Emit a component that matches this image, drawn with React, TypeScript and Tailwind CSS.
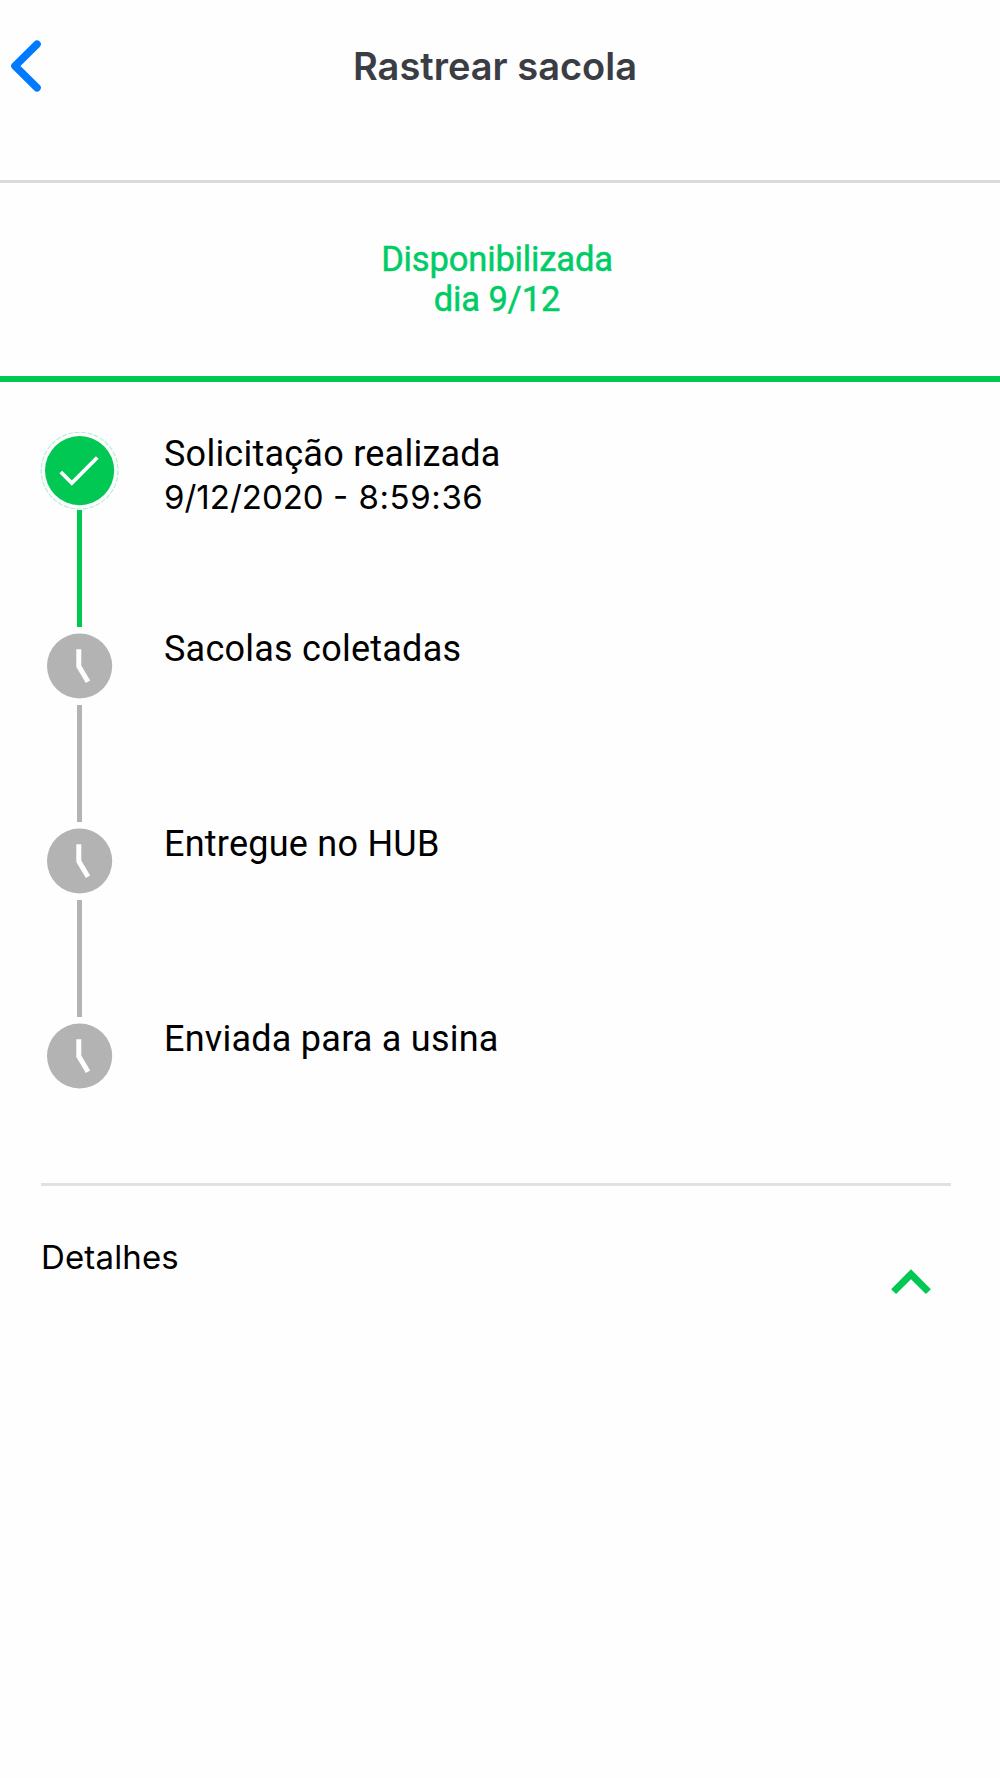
import clsx from 'clsx';

interface Step {
  label: string;
  date?: string;
  time?: string;
  done: boolean;
}

const steps: Step[] = [
  { label: 'Solicitação realizada', date: '9/12/2020', time: '8:59:36', done: true },
  { label: 'Sacolas coletadas', done: false },
  { label: 'Entregue no HUB', done: false },
  { label: 'Enviada para a usina', done: false },
];

function DoneIcon() {
  return (
    <svg className="block h-[78px] w-[80px] shrink-0" viewBox="0 0 80 78" fill="none">
      <circle cx="40.6" cy="38.6" r="38.4" stroke="#b4efd8" strokeWidth="1.2" strokeDasharray="5 1.5" />
      <circle cx="40.6" cy="38.6" r="34.6" fill="#00c853" />
      <path d="M21.8 40 L32.8 51 L58.3 25.5" stroke="#fff" strokeWidth="3.8" />
    </svg>
  );
}

function ClockIcon() {
  return (
    <svg className="block h-[78px] w-[80px] shrink-0" viewBox="0 0 80 78" fill="none">
      <circle cx="40.6" cy="39" r="32.6" fill="#b3b3b3" />
      <path d="M39.8 22.3 V39.2 L49 54.8" stroke="#fff" strokeWidth="5" />
    </svg>
  );
}

function TimelineStep({ step, last }: { step: Step; last: boolean }) {
  return (
    <li className="flex h-[195.33px]">
      <div className="flex w-[80px] shrink-0 flex-col items-center">
        {step.done ? <DoneIcon /> : <ClockIcon />}
        {!last && (
          <div className={clsx('ml-px w-[5px] flex-1', step.done ? 'bg-[#00c853]' : 'bg-[#b3b3b3]')} />
        )}
      </div>
      <div className="pt-px pl-[45px] whitespace-nowrap text-black">
        <p className="font-['Roboto',sans-serif] text-[36px] leading-[42px] tracking-[0.24px]">
          {step.label}
        </p>
        {step.date && (
          <p className="font-['Inter',sans-serif] text-[33px] leading-[44px]">
            {step.date} - <span className="ml-px tracking-[0.6px]">{step.time}</span>
          </p>
        )}
      </div>
    </li>
  );
}

export default function App() {
  return (
    <div className="min-h-[1778px] w-[1000px] bg-[#fefefe]">
      <header className="flex h-[183px] items-start border-b-[3px] border-[#dadada] pt-[36px]">
        <button type="button" aria-label="Voltar" className="h-[60px] w-[50px]">
          <svg className="block h-[60px] w-[50px]" viewBox="0 0 50 60" fill="none">
            <path
              d="M37 8.2 L15 30 L37 51.8"
              stroke="#007aff"
              strokeWidth="7.6"
              strokeLinecap="round"
              strokeLinejoin="round"
            />
          </svg>
        </button>
        <h1 className="flex-1 pr-[60px] text-center font-['Inter',sans-serif] text-[38px] leading-[60px] font-semibold text-[#3a3d44]">
          Rastrear sacola
        </h1>
      </header>

      <div className="h-[199px] border-b-[6px] border-[#00c853] pt-[55.5px] pr-[6px] text-center font-['Roboto',sans-serif] text-[34.5px] leading-[40.5px] tracking-[-0.15px] text-[#00cc66] [-webkit-text-stroke:0.5px_#00cc66]">
        <p>Disponibilizada</p>
        <p>dia 9/12</p>
      </div>

      <ul className="h-[801px] pt-[49.5px] pl-[39px]">
        {steps.map((step, index) => (
          <TimelineStep key={step.label} step={step} last={index === steps.length - 1} />
        ))}
      </ul>

      <section className="mr-[49px] ml-[41px] flex justify-between border-t-[3px] border-[#e1e1e1]">
        <h2 className="pt-[51px] font-['Inter',sans-serif] text-[33px] leading-[40px] tracking-[0.15px] text-black">
          Detalhes
        </h2>
        <button type="button" aria-label="Recolher" className="mt-[76px] mr-[15px] h-[40px] w-[50px]">
          <svg className="block h-[40px] w-[50px]" viewBox="0 0 50 40" fill="none">
            <path d="M7.6 29.6 L25 12.2 L42.4 29.6" stroke="#00c853" strokeWidth="7" />
          </svg>
        </button>
      </section>
    </div>
  );
}
